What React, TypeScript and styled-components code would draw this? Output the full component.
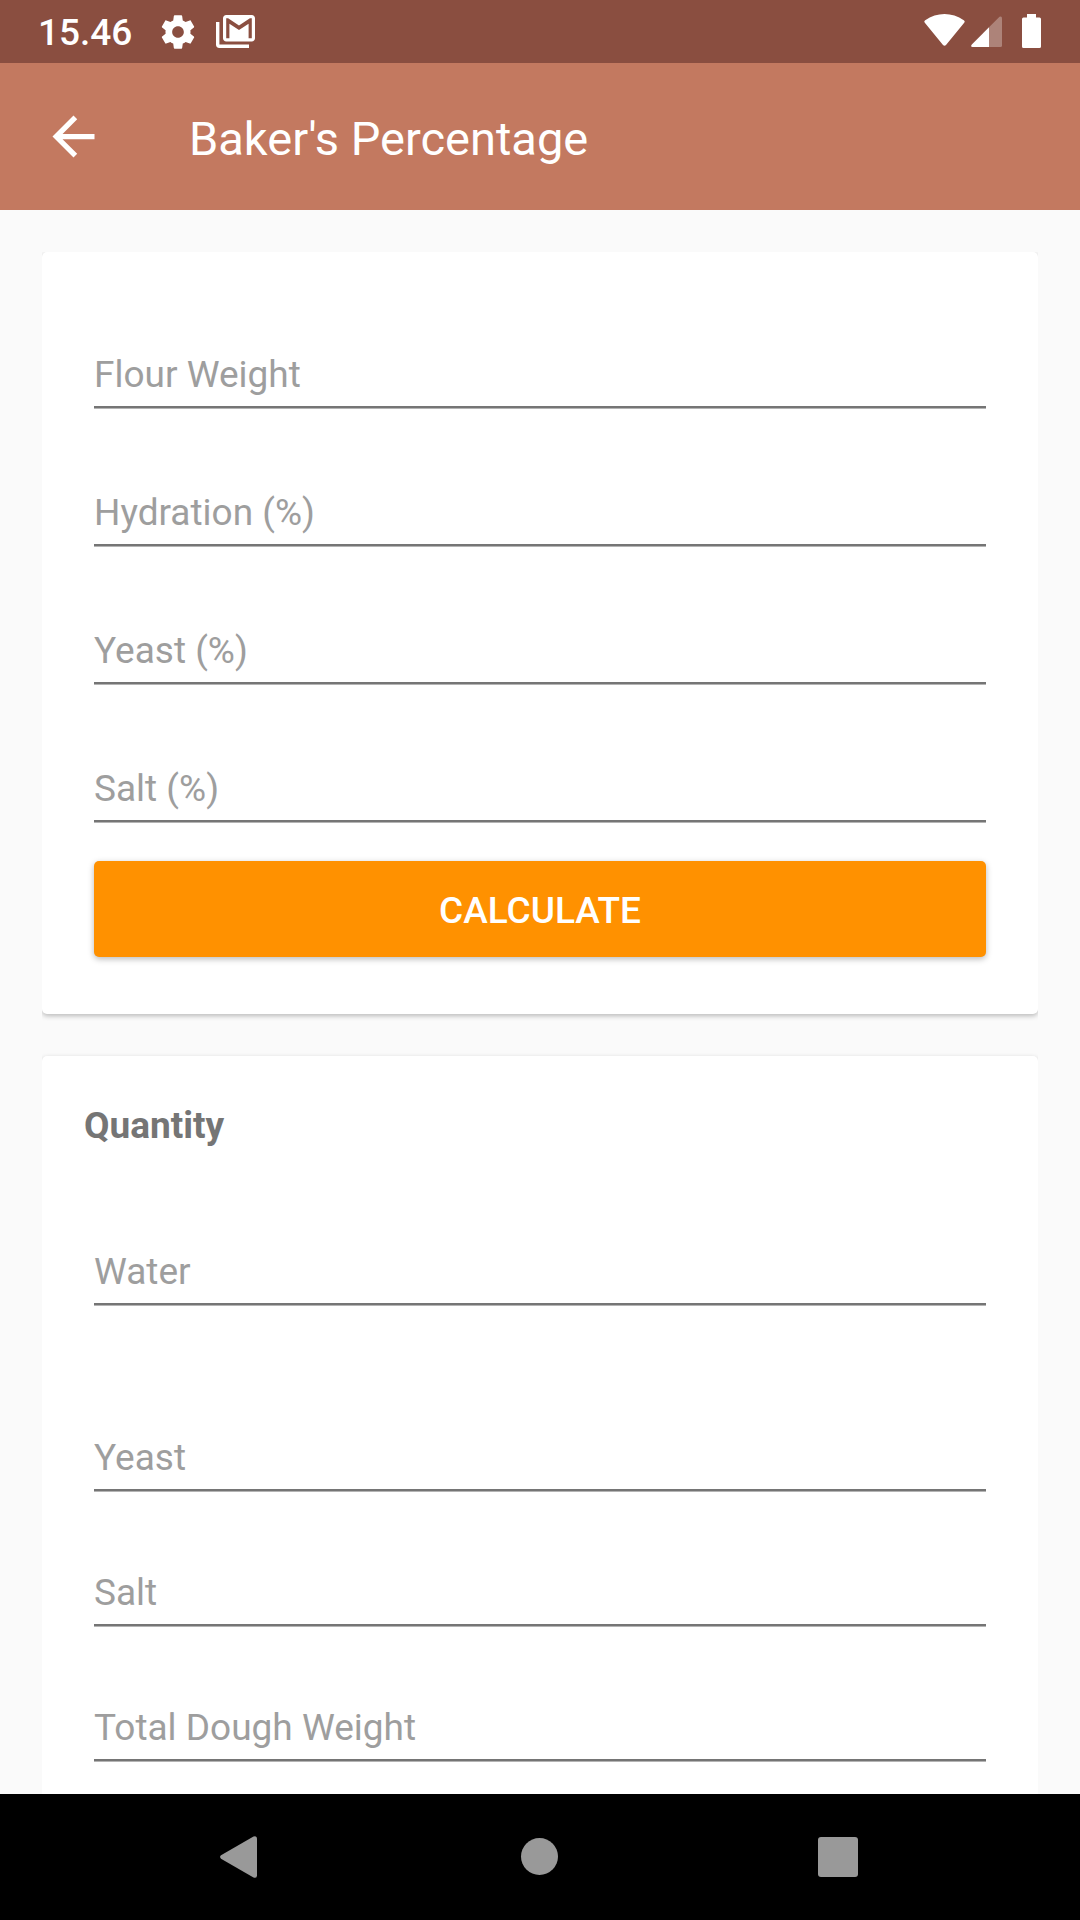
import React, { useState } from "react";
import styled, { createGlobalStyle } from "styled-components";

const GlobalStyle = createGlobalStyle`
  *, *::before, *::after { box-sizing: border-box; }
  html, body, #root { height: 100%; }
  body {
    margin: 0;
    background: #fafafa;
    font-family: Roboto, "Noto Sans", sans-serif;
    font-size: 37px;
    line-height: 43px;
  }
`;

const Screen = styled.div`
  display: flex;
  flex-direction: column;
  height: 100%;
  background: #fafafa;
`;

const StatusBar = styled.div`
  display: flex;
  flex: none;
  align-items: center;
  justify-content: space-between;
  height: 63px;
  padding: 0 39px 0 38px;
  background: #8a4e40;
  color: #fff;
  svg { display: block; }
`;

const StatusGroup = styled.div<{ $gap: number }>`
  display: flex;
  align-items: center;
  gap: ${(p) => p.$gap}px;
`;

const Clock = styled.time`
  font-weight: 500;
  padding-top: 2px;
`;

const AppBar = styled.header`
  display: flex;
  flex: none;
  align-items: center;
  gap: 84px;
  height: 147px;
  padding: 0 42px;
  background: #c37960;
  color: #fff;
`;

const IconButton = styled.button`
  display: flex;
  align-items: center;
  justify-content: center;
  padding: 0;
  border: 0;
  background: none;
  color: inherit;
  cursor: pointer;
`;

const Title = styled.h1`
  margin: 0;
  padding-top: 4px;
  font-size: 47px;
  line-height: 56px;
  font-weight: 400;
`;

const Content = styled.main`
  display: flex;
  flex: 1;
  flex-direction: column;
  gap: 42px;
  min-height: 0;
  margin: 42px 42px 0;
  padding-bottom: 42px;
  overflow-y: auto;
  scrollbar-width: none;
`;

const cardStyle = `
  display: flex;
  flex: none;
  flex-direction: column;
  border-radius: 5px;
  background: #fff;
  box-shadow: 0 2px 5px rgba(0, 0, 0, 0.26);
`;

const FormCard = styled.form`
  ${cardStyle}
  padding: 18px 52px 57px;
`;

const ResultCard = styled.section`
  ${cardStyle}
  padding: 48px 52px 57px;
`;

const SectionTitle = styled.h2`
  margin: 0 -10px 20px;
  color: #757575;
  font-size: 37px;
  line-height: 43px;
  font-weight: 700;
`;

const Field = styled.div<{ $space: number }>`
  display: flex;
  padding-top: ${(p) => p.$space}px;
`;

const TextInput = styled.input`
  flex: 1;
  min-width: 0;
  height: 75px;
  padding: 20px 0 10px;
  border: 0;
  border-bottom: 2px solid #757575;
  border-radius: 0;
  outline: none;
  background: none;
  box-shadow: 0 1px 0 #b4b4b4;
  color: #212121;
  font: inherit;
  &::placeholder { color: #9e9e9e; opacity: 1; }
`;

const SubmitButton = styled.button`
  height: 96px;
  margin-top: 39px;
  padding: 2px 0 0;
  border: 0;
  border-radius: 5px;
  background: #ff9100;
  box-shadow: 0 2px 6px rgba(0, 0, 0, 0.28);
  color: #fff;
  font: inherit;
  font-weight: 500;
  cursor: pointer;
`;

const NavBar = styled.nav`
  display: flex;
  flex: none;
  align-items: center;
  justify-content: center;
  height: 126px;
  padding-right: 2px;
  background: #000;
  color: #999;
`;

const NavButton = styled(IconButton)`
  width: 299px;
  height: 100%;
`;

const inputs = ["Flour Weight", "Hydration (%)", "Yeast (%)", "Salt (%)"];
const results = [
  { name: "Water", space: 63 },
  { name: "Yeast", space: 111 },
  { name: "Salt", space: 60 },
  { name: "Total Dough Weight", space: 60 },
];

const GearIcon = () => (
  <svg width="40" height="40" viewBox="0 0 24 24" fill="currentColor" aria-hidden="true">
    <path d="M19.43 12.98c.04-.32.07-.64.07-.98s-.03-.66-.07-.98l2.11-1.65c.19-.15.24-.42.12-.64l-2-3.46c-.12-.22-.39-.3-.61-.22l-2.49 1c-.52-.4-1.08-.73-1.69-.98l-.38-2.65C14.46 2.18 14.25 2 14 2h-4c-.25 0-.46.18-.49.42l-.38 2.65c-.61.25-1.17.59-1.69.98l-2.49-1c-.23-.09-.49 0-.61.22l-2 3.46c-.13.22-.07.49.12.64l2.11 1.65c-.04.32-.07.65-.07.98s.03.66.07.98l-2.11 1.65c-.19.15-.24.42-.12.64l2 3.46c.12.22.39.3.61.22l2.49-1c.52.4 1.08.73 1.69.98l.38 2.65c.03.24.24.42.49.42h4c.25 0 .46-.18.49-.42l.38-2.65c.61-.25 1.17-.59 1.69-.98l2.49 1c.23.09.49 0 .61-.22l2-3.46c.12-.22.07-.49-.12-.64l-2.11-1.65zM12 15.5c-1.93 0-3.5-1.57-3.5-3.5s1.57-3.5 3.5-3.5 3.5 1.57 3.5 3.5-1.57 3.5-3.5 3.5z" />
  </svg>
);

const MailIcon = () => (
  <svg width="39" height="33" viewBox="0 0 39 33" fill="currentColor" aria-hidden="true">
    <path d="M0 7H3.400V29.600H33V33H3.400Q0 33 0 29.600Z" />
    <path
      transform="translate(3.8 -6.64) scale(1.6 1.66)"
      d="M20 4H4c-1.1 0-2 .9-2 2v12c0 1.1.9 2 2 2h16c1.1 0 2-.9 2-2V6c0-1.1-.9-2-2-2zm0 14h-2V9.25L12 13 6 9.25V18H4V6h1.2l6.8 4.25L18.8 6H20v12z"
    />
  </svg>
);

const WifiIcon = () => (
  <svg width="41" height="35" viewBox="0 0 41 35" fill="currentColor" aria-hidden="true">
    <path d="M.8 8.800Q-.4 7.300 1.200 6.200C13 -2 28 -2 39.800 6.200Q41.400 7.300 40.200 8.800L22 31Q20.500 32.500 19 31Z" />
  </svg>
);

const SignalIcon = () => (
  <svg width="31" height="31" viewBox="0 0 31 31" fill="currentColor" aria-hidden="true">
    <path d="M28.500 .8Q31 -.5 31 2.500V29.500Q31 31 29.500 31H18V11.300Z" opacity="0.3" />
    <path d="M18 11.300V31H1.500Q-.7 30.700 .6 28.700Z" />
  </svg>
);

const BatteryIcon = () => (
  <svg width="19" height="35" viewBox="0 0 19 35" fill="currentColor" aria-hidden="true">
    <path d="M5 0H14V3.500H17.500Q19 3.500 19 5V32.500Q19 34 17.500 34H1.500Q0 34 0 32.500V5Q0 3.500 1.500 3.500H5Z" />
  </svg>
);

const BackArrow = () => (
  <svg width="63" height="63" viewBox="0 0 24 24" fill="currentColor" aria-hidden="true">
    <path d="M20 11H7.830l5.590-5.590L12 4l-8 8 8 8 1.410-1.410L7.830 13H20v-2z" />
  </svg>
);

const NavBack = () => (
  <svg width="40" height="42" viewBox="0 0 40 42" fill="currentColor" aria-hidden="true">
    <path d="M1 19.300L33.500 .5Q37 -.8 37 2.700V39.300Q37 42.800 33.500 41.500L1 22.700Q-.8 21 1 19.300Z" />
  </svg>
);

const NavHome = () => (
  <svg width="38" height="38" viewBox="0 0 38 38" fill="currentColor" aria-hidden="true">
    <circle cx="19.5" cy="18.5" r="18.5" />
  </svg>
);

const NavRecents = () => (
  <svg width="40" height="40" viewBox="0 0 40 40" fill="currentColor" aria-hidden="true">
    <rect width="40" height="40" rx="3" />
  </svg>
);

export default function App() {
  const [values, setValues] = useState<Record<string, string>>({});
  const [quantities, setQuantities] = useState<Record<string, string>>({});

  const calculate = (event: React.FormEvent) => {
    event.preventDefault();
    const [flour, water, yeast, salt] = inputs.map((name) => Number(values[name]) || 0);
    const share = (percent: number) => (flour * percent) / 100;
    setQuantities({
      Water: String(share(water)),
      Yeast: String(share(yeast)),
      Salt: String(share(salt)),
      "Total Dough Weight": String(flour + share(water + yeast + salt)),
    });
  };

  return (
    <Screen>
      <GlobalStyle />
      <StatusBar>
        <StatusGroup $gap={26}>
          <Clock>15.46</Clock>
          <StatusGroup $gap={18}>
            <GearIcon />
            <MailIcon />
          </StatusGroup>
        </StatusGroup>
        <StatusGroup $gap={20}>
          <StatusGroup $gap={6}>
            <WifiIcon />
            <SignalIcon />
          </StatusGroup>
          <BatteryIcon />
        </StatusGroup>
      </StatusBar>
      <AppBar>
        <IconButton type="button" aria-label="Navigate up">
          <BackArrow />
        </IconButton>
        <Title>Baker's Percentage</Title>
      </AppBar>
      <Content>
        <FormCard onSubmit={calculate}>
          {inputs.map((name) => (
            <Field key={name} $space={63}>
              <TextInput
                aria-label={name}
                placeholder={name}
                inputMode="decimal"
                value={values[name] ?? ""}
                onChange={(e) => setValues({ ...values, [name]: e.target.value })}
              />
            </Field>
          ))}
          <SubmitButton type="submit">CALCULATE</SubmitButton>
        </FormCard>
        <ResultCard>
          <SectionTitle>Quantity</SectionTitle>
          {results.map(({ name, space }) => (
            <Field key={name} $space={space}>
              <TextInput aria-label={name} placeholder={name} value={quantities[name] ?? ""} readOnly />
            </Field>
          ))}
        </ResultCard>
      </Content>
      <NavBar>
        <NavButton type="button" aria-label="Back"><NavBack /></NavButton>
        <NavButton type="button" aria-label="Home"><NavHome /></NavButton>
        <NavButton type="button" aria-label="Recent apps"><NavRecents /></NavButton>
      </NavBar>
    </Screen>
  );
}
